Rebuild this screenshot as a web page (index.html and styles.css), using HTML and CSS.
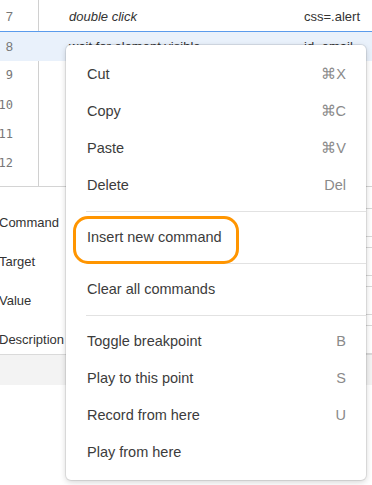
FILE: index.html
```html
<!DOCTYPE html>
<html>
<head>
<meta charset="utf-8">
<link rel="stylesheet" href="styles.css">
</head>
<body>
<div class="page">
  <div class="grid">
    <div class="row">
      <div class="num">7</div>
      <div class="cmd italic">double click</div>
      <div class="tgt">css=.alert</div>
    </div>
    <div class="row selected">
      <div class="num">8</div>
      <div class="cmd">wait for element visible</div>
      <div class="tgt">id=email</div>
    </div>
    <div class="row"><div class="num mono">9</div><div class="cmd"></div><div class="tgt"></div></div>
    <div class="row"><div class="num mono">10</div><div class="cmd"></div><div class="tgt"></div></div>
    <div class="row"><div class="num mono">11</div><div class="cmd"></div><div class="tgt"></div></div>
    <div class="row"><div class="num mono">12</div><div class="cmd"></div><div class="tgt"></div></div>
  </div>
  <div class="editor">
    <div class="field"><span class="label">Command</span><span class="input"></span></div>
    <div class="field"><span class="label">Target</span><span class="input"></span></div>
    <div class="field"><span class="label">Value</span><span class="input"></span></div>
    <div class="field"><span class="label">Description</span><span class="input"></span></div>
  </div>
  <div class="bar"></div>

  <div class="menu">
    <div class="item"><span>Cut</span><span class="key">⌘X</span></div>
    <div class="item"><span>Copy</span><span class="key">⌘C</span></div>
    <div class="item"><span>Paste</span><span class="key">⌘V</span></div>
    <div class="item"><span>Delete</span><span class="key">Del</span></div>
    <div class="sep"></div>
    <div class="item"><span>Insert new command</span></div>
    <div class="sep"></div>
    <div class="item"><span>Clear all commands</span></div>
    <div class="sep"></div>
    <div class="item"><span>Toggle breakpoint</span><span class="key">B</span></div>
    <div class="item"><span>Play to this point</span><span class="key">S</span></div>
    <div class="item"><span>Record from here</span><span class="key">U</span></div>
    <div class="item"><span>Play from here</span></div>
    <div class="ring"></div>
  </div>
</div>
</body>
</html>
```
FILE: styles.css
```css
html, body {
  margin: 0;
  padding: 0;
  background: #fff;
  overflow: hidden;
}
.page {
  position: relative;
  width: 372px;
  height: 485px;
  overflow: hidden;
  font-family: "Liberation Sans", Arial, sans-serif;
  color: #333;
}
.grid {
  height: 184px;
  padding-top: 2px;
  border-bottom: 1px solid #d4d4d4;
  background: linear-gradient(#d0d0d0, #d0d0d0) 38px 0 / 1px 100% no-repeat;
}
.row {
  height: 29.3px;
  display: flex;
  align-items: center;
  font-size: 13px;
  box-sizing: border-box;
}
.row.selected {
  background: #e9f1fb;
  border-top: 1px solid #5a9bec;
}
.num {
  width: 13px;
  text-align: right;
  color: #777;
  white-space: nowrap;
  direction: rtl;
}
.num.mono {
  font-family: "DejaVu Sans Mono", monospace;
  font-size: 12px;
}
.cmd {
  margin-left: 56px;
  width: 235px;
  white-space: nowrap;
}
.italic { font-style: italic; }
.tgt {
  white-space: nowrap;
}
.editor {
  padding-top: 21px;
  display: flex;
  flex-direction: column;
  gap: 10px;
  height: 167px;
  box-sizing: border-box;
}
.field {
  display: flex;
  align-items: center;
  height: 29.4px;
  font-size: 13px;
}
.label {
  width: 100px;
  margin-left: -1px;
  color: #333;
}
.input {
  flex: 1;
  height: 29px;
  border: 1px solid #d8d8d8;
  margin-right: -40px;
  box-sizing: border-box;
}
.bar {
  height: 30px;
  background: #f3f3f3;
  border-top: 1px solid #dadada;
}
.menu {
  position: absolute;
  left: 66px;
  top: 45px;
  width: 300px;
  height: 435px;
  box-sizing: border-box;
  padding: 10.5px 0;
  background: #fff;
  border-radius: 5px;
  box-shadow: 0 0 0 1px rgba(0,0,0,0.08), 0 2px 6px rgba(0,0,0,0.18);
  font-size: 14.5px;
  color: #3c3c3c;
}
.item {
  height: 37px;
  display: flex;
  align-items: center;
  justify-content: space-between;
  padding: 0 20px 0 21px;
}
.key {
  color: #8a8a8a;
}
.sep {
  height: 1px;
  margin: 7px 0 7px 20px;
  background: #e2e2e2;
}
.ring {
  position: absolute;
  left: 7px;
  top: 171px;
  width: 166px;
  height: 48px;
  box-sizing: border-box;
  border: 3.5px solid #ff9500;
  border-radius: 15px;
}
```
